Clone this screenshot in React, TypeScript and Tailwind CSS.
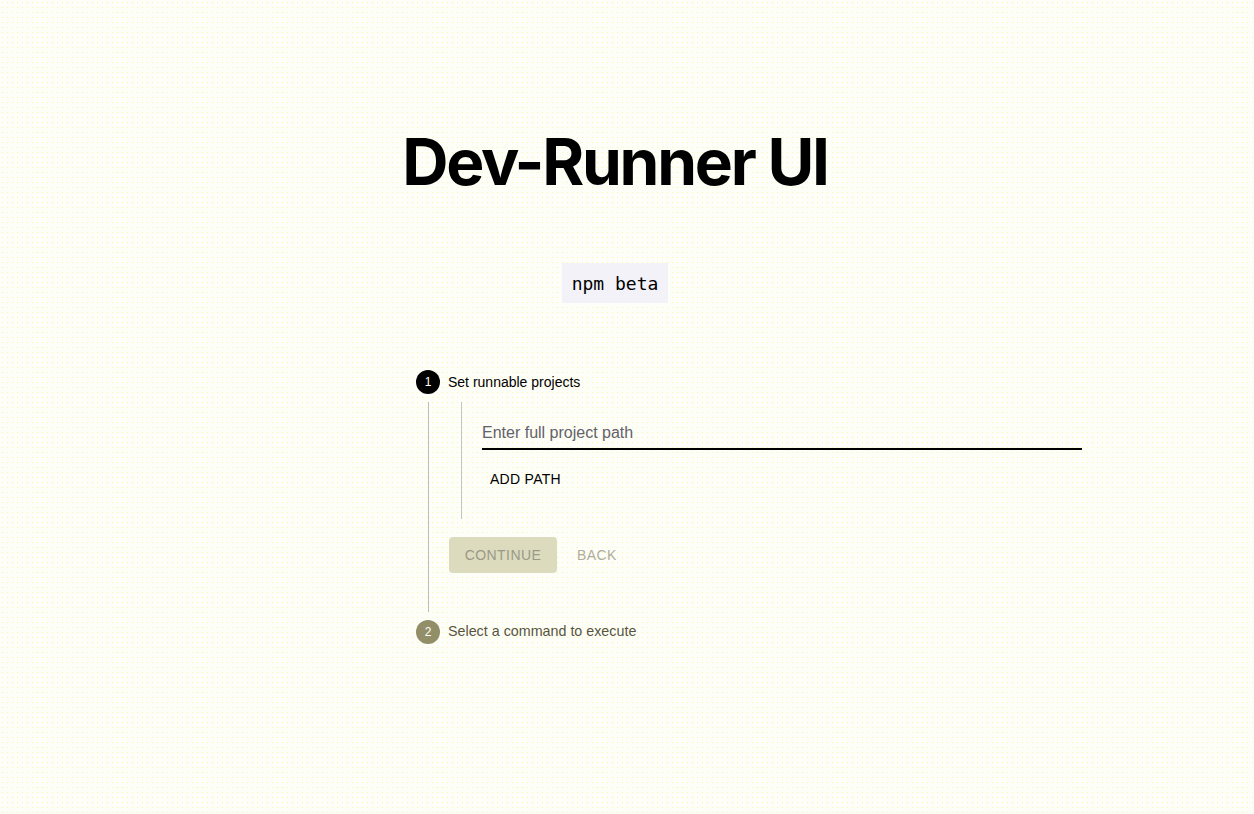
import { useState } from 'react';

const App = () => {
  const [path, setPath] = useState('');

  return (
    <div
      className="min-h-screen w-full bg-[#fefef8] bg-[radial-gradient(#fbf7a6_0.5px,transparent_0.8px)] bg-[length:5px_5px]"
      style={{ fontFamily: '"Liberation Sans", Arial, sans-serif' }}
    >
      {/* 标题 */}
      <div className="flex flex-col items-center pl-[6px] pr-[30px]">
        <h1
          className="mt-[130px] text-[64px] leading-none font-bold tracking-[-0.035em] text-black"
          style={{ fontFamily: 'Inter, "Liberation Sans", sans-serif' }}
        >
          Dev-Runner UI
        </h1>
        <div
          className="mt-[69px] h-[40px] px-[10px] flex items-center bg-[#f2f2f8] text-[18px] text-black"
          style={{ fontFamily: '"DejaVu Sans Mono", "Liberation Mono", monospace' }}
        >
          npm beta
        </div>
      </div>

      {/* 步骤条 */}
      <div className="mt-[67px] ml-[416px] w-[680px]">
        {/* 第一步 */}
        <div className="flex items-center h-6">
          <div className="w-6 h-6 rounded-full bg-black text-white text-[12px] flex items-center justify-center">
            1
          </div>
          <span className="ml-2 text-[14px] text-black">Set runnable projects</span>
        </div>

        <div className="ml-3 mt-2 border-l border-[#bdbdbd] pl-5 pb-2">
          <div className="ml-3 border-l border-[#c4c4d0] pl-5 pt-[17px] pb-[22px]">
            <div className="border-b-2 border-black w-[600px] h-[31px] flex items-end pb-[3px]">
              <input
                value={path}
                onChange={(e) => setPath(e.target.value)}
                placeholder="Enter full project path"
                className="w-full bg-transparent outline-none text-[16px] text-black placeholder:text-[#62626c]"
              />
            </div>
            <button className="mt-[11px] h-9 px-2 text-[14px] text-black uppercase tracking-[0.02em]">
              Add path
            </button>
          </div>

          <div className="mt-[18px] flex items-center gap-1">
            <button
              disabled
              className="h-9 w-[108px] rounded bg-[#dcdbbd] text-[14px] uppercase tracking-[0.03em] text-[#9a9988]"
            >
              Continue
            </button>
            <button className="h-9 px-4 text-[14px] uppercase tracking-[0.03em] text-[#aeae9c]">
              Back
            </button>
          </div>
          <div className="h-[31px]" />
        </div>

        {/* 第二步 */}
        <div className="flex items-center h-6 mt-2">
          <div className="w-6 h-6 rounded-full bg-[#918e68] text-white text-[12px] flex items-center justify-center">
            2
          </div>
          <span className="ml-2 text-[14.3px] text-[#57553f]">Select a command to execute</span>
        </div>
      </div>
    </div>
  );
};

export default App;
